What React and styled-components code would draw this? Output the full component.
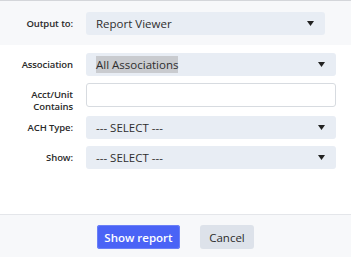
import React from "react";
import styled, { createGlobalStyle } from "styled-components";

const Global = createGlobalStyle`
  html, body { margin: 0; padding: 0; background: #fff; }
  body { font-family: "Open Sans", "Noto Sans", sans-serif; color: #2b2b2b; }
`;

const Page = styled.div`
  width: 351px;
  height: 257px;
  display: flex;
  flex-direction: column;
  border-top: 1px solid #d4d6da;
  box-sizing: border-box;
`;

const TopSection = styled.div`
  background: #f7f8fa;
  height: 44px;
  display: flex;
  align-items: center;
  padding-top: 1px;
  box-sizing: border-box;
`;

const Body = styled.div`
  flex: 1;
  display: flex;
  flex-direction: column;
  padding-top: 8px;
`;

const Row = styled.div`
  display: flex;
  align-items: ${(p) => (p.$top ? "flex-start" : "center")};
  margin-top: ${(p) => p.$mt || 0}px;
`;

const Label = styled.div`
  width: 73px;
  flex: none;
  text-align: right;
  font-size: 9.5px;
  font-weight: 600;
  letter-spacing: -0.1px;
  line-height: 12px;
  color: #2a2a2a;
  margin-right: 13px;
  padding-top: ${(p) => p.$pt || 0}px;
`;

const Select = styled.div`
  width: ${(p) => p.$w}px;
  height: 23px;
  box-sizing: border-box;
  background: #e8edf4;
  border-radius: 3px;
  display: flex;
  align-items: center;
  justify-content: space-between;
  padding: 0 11px 0 10px;
  font-size: 11.5px;
  color: #2e2e2e;
`;

const Highlight = styled.span`
  background: #c9cbcf;
  padding: 1px 0;
`;

const Arrow = styled.svg`
  width: 7px;
  height: 5px;
  flex: none;
`;

const Input = styled.div`
  width: 250px;
  height: 24px;
  box-sizing: border-box;
  background: #fff;
  border: 1px solid #d7dbe0;
  border-radius: 3px;
`;

const Footer = styled.div`
  height: 43px;
  border-top: 1px solid #e4e6ea;
  background: #f7f8fa;
  display: flex;
  justify-content: center;
  padding-top: 10px;
  gap: 20px;
  box-sizing: border-box;
`;

const Button = styled.button`
  width: ${(p) => p.$w}px;
  height: 24px;
  border: none;
  border-radius: 3px;
  font-family: inherit;
  font-size: 11.5px;
  font-weight: ${(p) => (p.$primary ? 600 : 500)};
  padding: 0;
  background: ${(p) => (p.$primary ? "#4a63f6" : "#dde2ea")};
  color: ${(p) => (p.$primary ? "#fff" : "#2b2b2b")};
  box-shadow: ${(p) => (p.$primary ? "0 0 0 1px #6b80f7 inset" : "none")};
  cursor: pointer;
`;

const Caret = () => (
  <Arrow viewBox="0 0 7 5">
    <path d="M0 0 H7 L3.5 5 Z" fill="#222" />
  </Arrow>
);

export default function App() {
  return (
    <Page>
      <Global />
      <TopSection>
        <Row>
          <Label>Output to:</Label>
          <Select $w={239}>
            <span>Report Viewer</span>
            <Caret />
          </Select>
        </Row>
      </TopSection>
      <Body>
        <Row>
          <Label>Association</Label>
          <Select $w={250}>
            <Highlight>All Associations</Highlight>
            <Caret />
          </Select>
        </Row>
        <Row $top $mt={7}>
          <Label $pt={6}>Acct/Unit<br />Contains</Label>
          <Input />
        </Row>
        <Row $mt={3}>
          <Label>ACH Type:</Label>
          <Select $w={250}>
            <span>--- SELECT ---</span>
            <Caret />
          </Select>
        </Row>
        <Row $mt={7}>
          <Label>Show:</Label>
          <Select $w={250}>
            <span>--- SELECT ---</span>
            <Caret />
          </Select>
        </Row>
      </Body>
      <Footer>
        <Button $primary $w={83}>Show report</Button>
        <Button $w={54}>Cancel</Button>
      </Footer>
    </Page>
  );
}
